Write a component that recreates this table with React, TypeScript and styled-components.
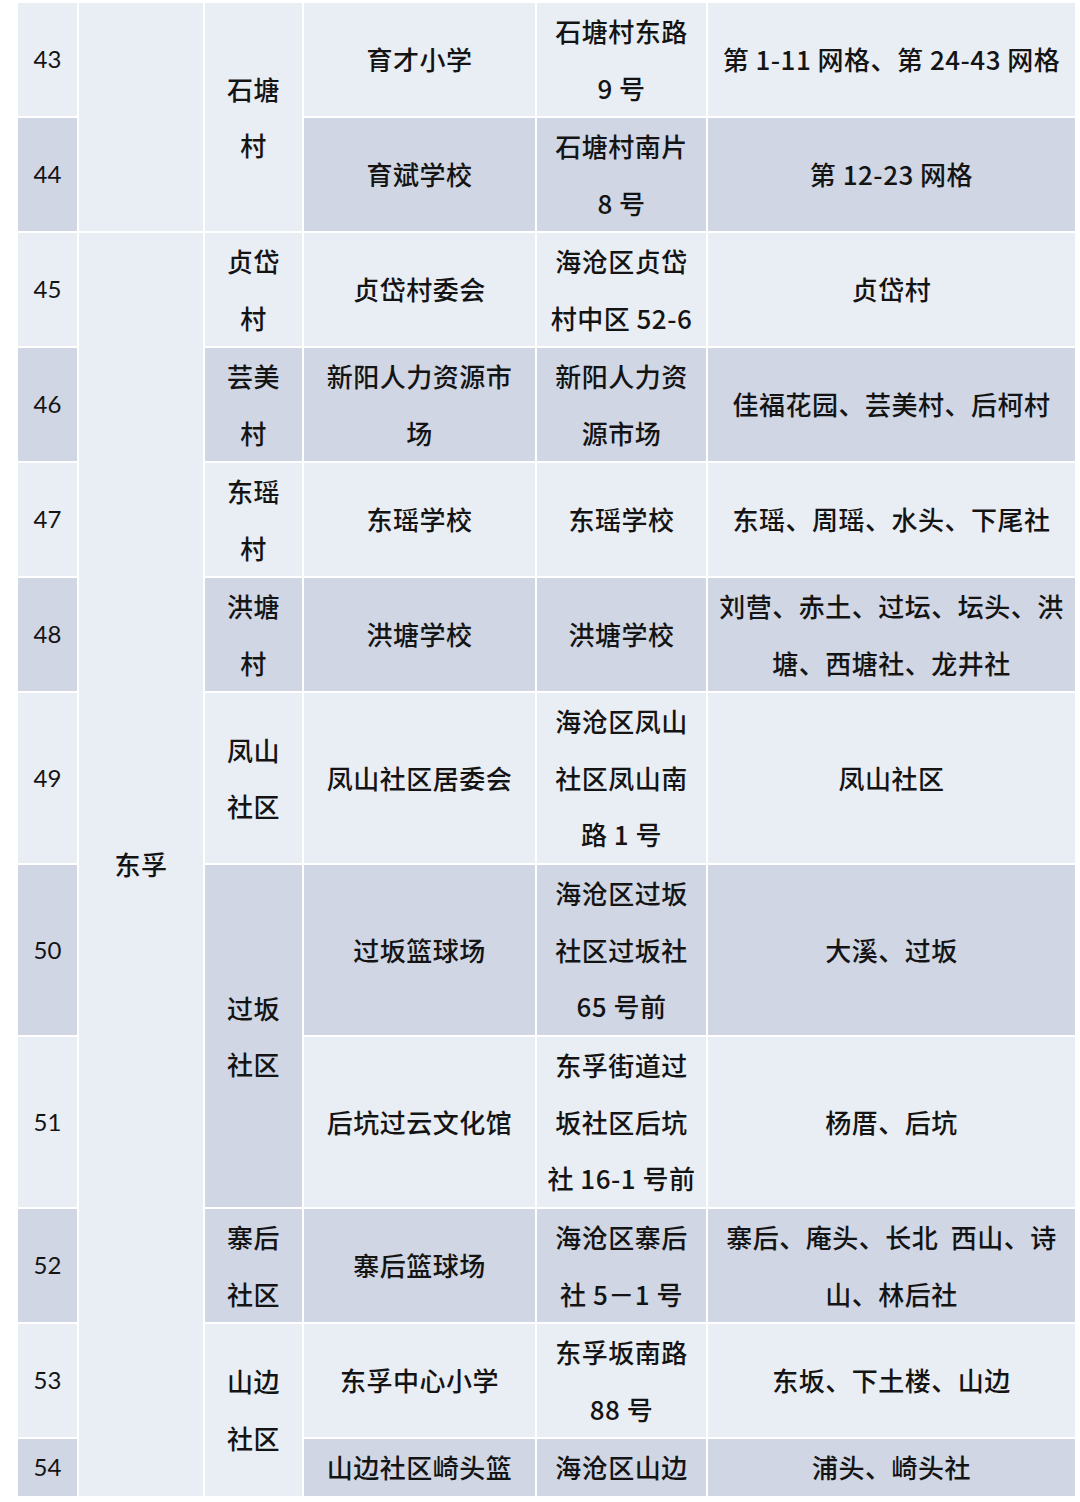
import React from "react";
import styled, { createGlobalStyle } from "styled-components";

const GlobalStyle = createGlobalStyle`
  html, body {
    margin: 0;
    padding: 0;
    background: #ffffff;
  }
`;

type Tone = "light" | "dark";

const tones: Record<Tone, string> = {
  light: "#e9edf4",
  dark: "#d0d6e4",
};

const Table = styled.table`
  margin: 1px 0 0 16px;
  border-collapse: separate;
  border-spacing: 2px;
  table-layout: fixed;
  width: 1061px;
  background: #ffffff;
  font-family: "Noto Sans CJK SC", "Noto Sans", sans-serif;
  font-size: 26px;
  font-weight: 500;
  color: #141414;
`;

const Col = styled.col<{ $w: number }>`
  width: ${(p) => p.$w}px;
`;

const Row = styled.tr<{ $h: number }>`
  height: ${(p) => p.$h}px;
`;

const Cell = styled.td<{ $tone: Tone }>`
  background: ${(p) => tones[p.$tone]};
  padding: 0;
  text-align: center;
  vertical-align: middle;
  line-height: 56.5px;
  letter-spacing: 0.5px;
  white-space: pre;
  overflow: hidden;
`;

const NumCell = styled(Cell)`
  font-family: Lato, "Liberation Sans", sans-serif;
  font-size: 24px;
  font-weight: 400;
  letter-spacing: 0;
`;

function Lines({ text }: { text: string }) {
  const parts = text.split("/");
  return (
    <>
      {parts.map((p, i) => (
        <React.Fragment key={i}>
          {i > 0 && <br />}
          {p}
        </React.Fragment>
      ))}
    </>
  );
}

interface Merge {
  text: string;
  span: number;
}

interface Entry {
  no: number;
  tone: Tone;
  h: number;
  street?: Merge;
  village?: Merge;
  site: string;
  address: string;
  area: string;
}

const rows: Entry[] = [
  {
    no: 43, tone: "light", h: 113,
    street: { text: "", span: 2 },
    village: { text: "石塘/村", span: 2 },
    site: "育才小学", address: "石塘村东路/9 号", area: "第 1-11 网格、第 24-43 网格",
  },
  { no: 44, tone: "dark", h: 113, site: "育斌学校", address: "石塘村南片/8 号", area: "第 12-23 网格" },
  {
    no: 45, tone: "light", h: 113,
    street: { text: "东孚", span: 10 },
    village: { text: "贞岱/村", span: 1 },
    site: "贞岱村委会", address: "海沧区贞岱/村中区 52-6", area: "贞岱村",
  },
  {
    no: 46, tone: "dark", h: 113, village: { text: "芸美/村", span: 1 },
    site: "新阳人力资源市/场", address: "新阳人力资/源市场", area: "佳福花园、芸美村、后柯村",
  },
  {
    no: 47, tone: "light", h: 113, village: { text: "东瑶/村", span: 1 },
    site: "东瑶学校", address: "东瑶学校", area: "东瑶、周瑶、水头、下尾社",
  },
  {
    no: 48, tone: "dark", h: 113, village: { text: "洪塘/村", span: 1 },
    site: "洪塘学校", address: "洪塘学校", area: "刘营、赤土、过坛、坛头、洪/塘、西塘社、龙井社",
  },
  {
    no: 49, tone: "light", h: 170, village: { text: "凤山/社区", span: 1 },
    site: "凤山社区居委会", address: "海沧区凤山/社区凤山南/路 1 号", area: "凤山社区",
  },
  {
    no: 50, tone: "dark", h: 170, village: { text: "过坂/社区", span: 2 },
    site: "过坂篮球场", address: "海沧区过坂/社区过坂社/65 号前", area: "大溪、过坂",
  },
  {
    no: 51, tone: "light", h: 170,
    site: "后坑过云文化馆", address: "东孚街道过/坂社区后坑/社 16-1 号前", area: "杨厝、后坑",
  },
  {
    no: 52, tone: "dark", h: 113, village: { text: "寨后/社区", span: 1 },
    site: "寨后篮球场", address: "海沧区寨后/社 5－1 号", area: "寨后、庵头、长北  西山、诗/山、林后社",
  },
  {
    no: 53, tone: "light", h: 113, village: { text: "山边/社区", span: 2 },
    site: "东孚中心小学", address: "东孚坂南路/88 号", area: "东坂、下土楼、山边",
  },
  { no: 54, tone: "dark", h: 55, site: "山边社区崎头篮", address: "海沧区山边", area: "浦头、崎头社" },
];

export default function App() {
  return (
    <>
      <GlobalStyle />
      <Table>
        <colgroup>
          <Col $w={59} />
          <Col $w={124} />
          <Col $w={97} />
          <Col $w={231} />
          <Col $w={169} />
          <Col $w={367} />
        </colgroup>
        <tbody>
          {rows.map((r) => (
            <Row key={r.no} $h={r.h}>
              <NumCell $tone={r.tone}>{r.no}</NumCell>
              {r.street && (
                <Cell $tone={r.tone} rowSpan={r.street.span}>
                  <Lines text={r.street.text} />
                </Cell>
              )}
              {r.village && (
                <Cell $tone={r.tone} rowSpan={r.village.span}>
                  <Lines text={r.village.text} />
                </Cell>
              )}
              <Cell $tone={r.tone}>
                <Lines text={r.site} />
              </Cell>
              <Cell $tone={r.tone}>
                <Lines text={r.address} />
              </Cell>
              <Cell $tone={r.tone}>
                <Lines text={r.area} />
              </Cell>
            </Row>
          ))}
        </tbody>
      </Table>
    </>
  );
}
